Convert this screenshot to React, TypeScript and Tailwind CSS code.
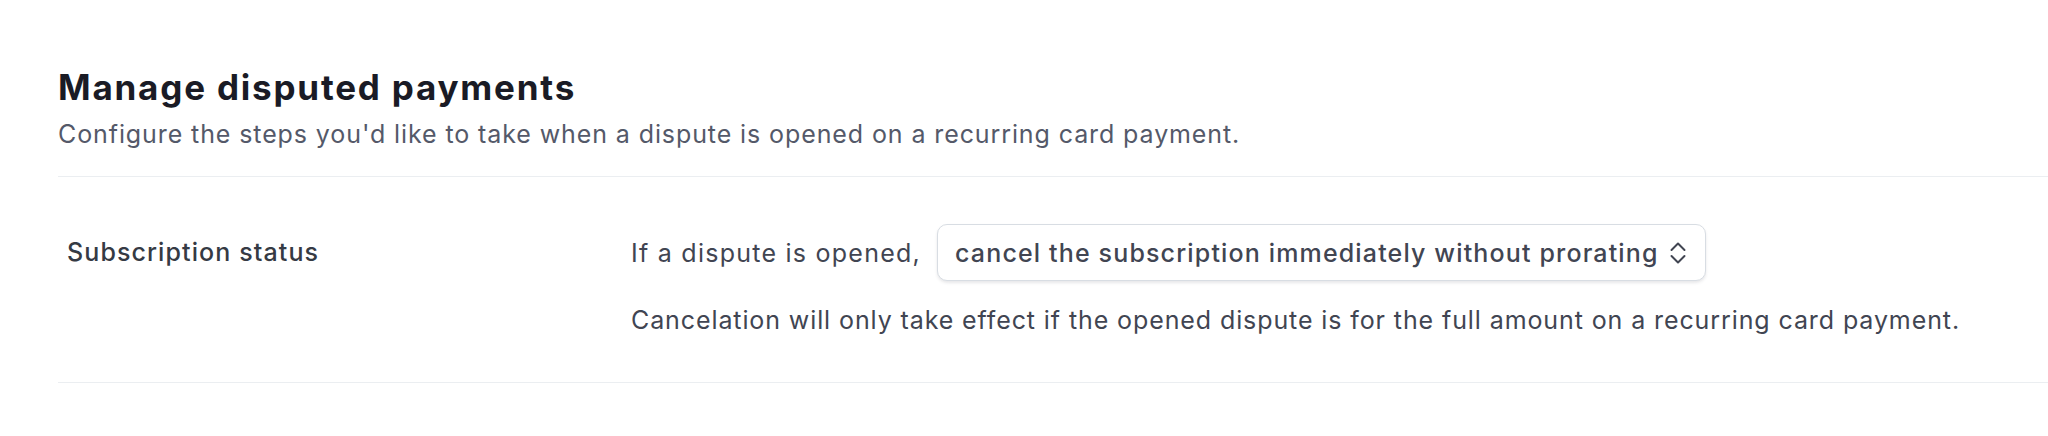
const font = "font-['Inter','Liberation_Sans',sans-serif]";

function UpDownIcon() {
  return (
    <svg
      width="16"
      height="22"
      viewBox="0 0 16 22"
      fill="none"
      stroke="currentColor"
      strokeWidth="2"
      strokeLinecap="round"
      strokeLinejoin="round"
    >
      <path d="M1.5 8 8 1.5 14.5 8" />
      <path d="M1.5 14 8 20.5 14.5 14" />
    </svg>
  );
}

function SelectBox({ value }: { value: string }) {
  return (
    <button className="flex h-[57px] items-center gap-[11px] rounded-[10px] border border-[#d8dde3] bg-white pl-[17px] pr-[19px] text-[25px] font-medium tracking-[1.15px] text-[#414552] shadow-[0_2px_3px_rgba(64,68,82,0.12)]">
      <span>{value}</span>
      <span className="text-[#414552]">
        <UpDownIcon />
      </span>
    </button>
  );
}

export default function App() {
  return (
    <div className={`min-h-[436px] bg-white pl-[58px] pt-[67px] ${font}`}>
      <div className="border-b border-[#ebeef1] pb-[26px]">
        <h1 className="text-[35px] font-bold leading-[40px] tracking-[1.8px] text-[#1a1b25]">
          Manage disputed payments
        </h1>
        <p className="mt-[11px] text-[25px] leading-[32px] tracking-[0.9px] text-[#545969]">
          Configure the steps you'd like to take when a dispute is opened on a
          recurring card payment.
        </p>
      </div>

      <div className="flex border-b border-[#ebeef1] pb-[46px] pt-[47px]">
        <div className="flex h-[57px] w-[573px] shrink-0 items-center pl-[9px] text-[25px] font-medium tracking-[1.1px] text-[#353a44]">
          Subscription status
        </div>
        <div className="flex flex-col gap-[23px] text-[25px] leading-[32px] tracking-[0.9px] text-[#414552]">
          <div className="flex items-center gap-[16px]">
            <span className="tracking-[1.25px]">If a dispute is opened,</span>
            <SelectBox value="cancel the subscription immediately without prorating" />
          </div>
          <p>
            Cancelation will only take effect if the opened dispute is for the
            full amount on a recurring card payment.
          </p>
        </div>
      </div>
    </div>
  );
}
